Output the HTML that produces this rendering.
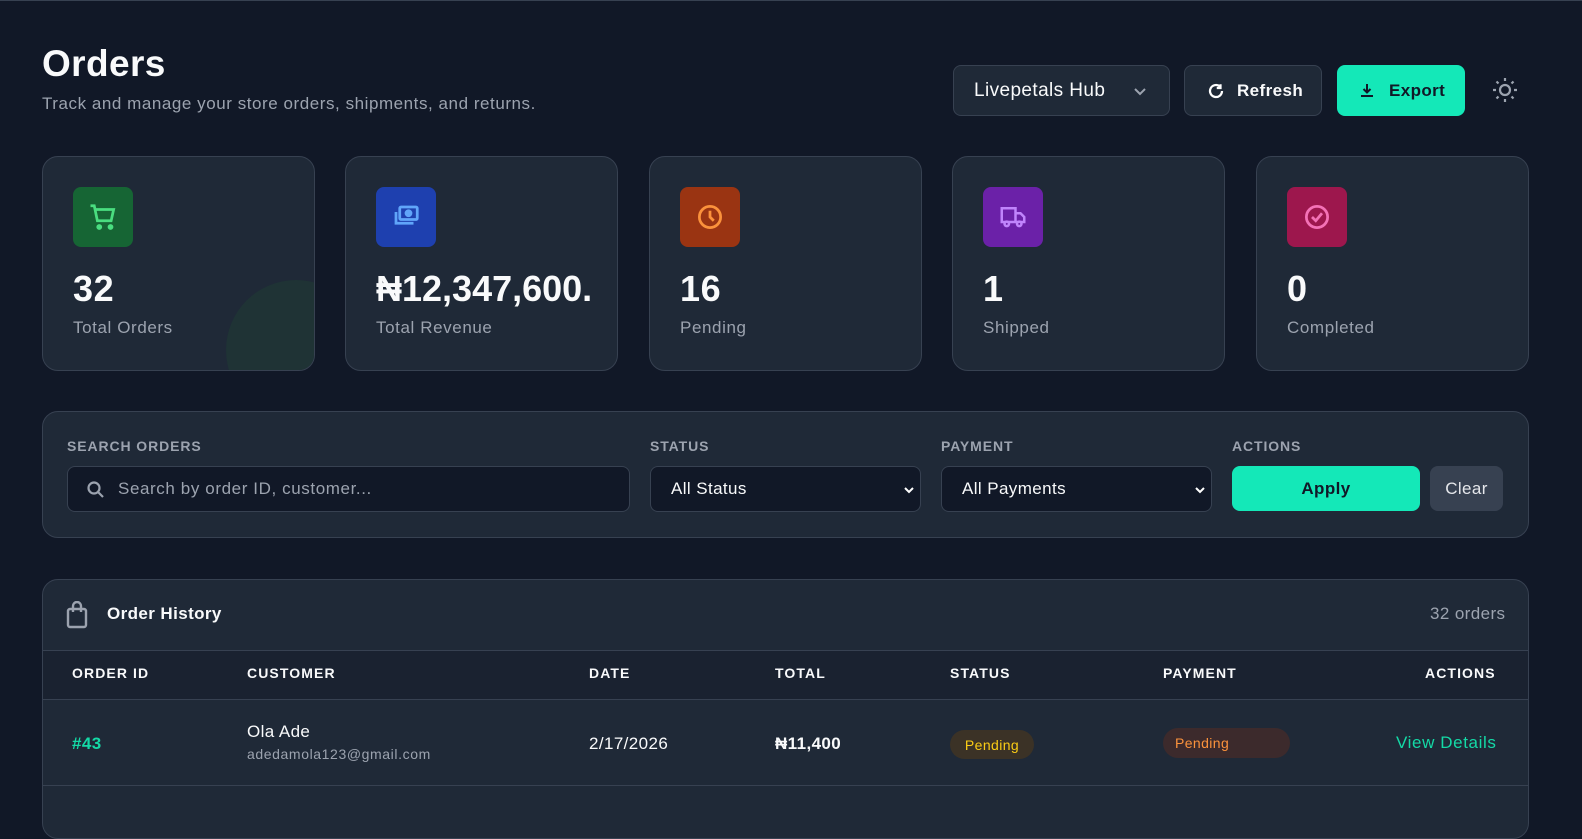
<!DOCTYPE html>
<html><head><meta charset="utf-8"><style>
*{box-sizing:border-box;margin:0;padding:0}
body{width:1582px;height:817px;background:#111827;font-family:"Liberation Sans",sans-serif;color:#f9fafb;position:relative;overflow:hidden;border-top:1px solid #374151;letter-spacing:.4px}
.a{position:absolute}
.card{position:absolute;top:155px;width:273px;height:215px;background:#1f2937;border:1px solid #374151;border-radius:16px;overflow:hidden}
.ic{position:absolute;left:30px;top:30px;width:60px;height:60px;border-radius:8px;display:flex;align-items:center;justify-content:center}
.num{position:absolute;left:30px;top:111px;font-size:36px;font-weight:bold;white-space:nowrap;letter-spacing:.6px}
.lbl{position:absolute;left:30px;top:161px;font-size:17px;color:#9ca3af;letter-spacing:.6px}
.flbl{position:absolute;top:437px;font-size:14px;font-weight:bold;color:#9ca3af;letter-spacing:.9px}
.inp{position:absolute;top:465px;height:46px;background:#111827;border:1px solid #374151;border-radius:8px;font-size:17px;display:flex;align-items:center}
.th{position:absolute;top:664px;font-size:14px;font-weight:bold;letter-spacing:1.1px}
</style></head><body>
<div class="a" style="left:42px;top:42px;font-size:37px;font-weight:bold">Orders</div>
<div class="a" style="left:42px;top:93px;font-size:17px;color:#9ca3af;letter-spacing:.55px">Track and manage your store orders, shipments, and returns.</div>

<div class="a" style="left:953px;top:64px;width:217px;height:51px;background:#1f2937;border:1px solid #374151;border-radius:8px;font-size:19px;display:flex;align-items:center;padding-left:20px">Livepetals Hub
<svg class="a" style="left:178px;top:17px" width="16" height="16" viewBox="0 0 16 16" fill="none" stroke="#9ca3af" stroke-width="2"><path d="M3 6l5 5 5-5"/></svg></div>
<div class="a" style="left:1184px;top:64px;width:138px;height:51px;background:#1f2937;border:1px solid #374151;border-radius:8px;font-size:17px;font-weight:bold;display:flex;align-items:center;padding-left:52px">Refresh
<svg class="a" style="left:22px;top:16px" width="18" height="18" viewBox="0 0 24 24" fill="none" stroke="#fff" stroke-width="3"><path d="M20 12a8 8 0 1 1-3-6.2"/><path d="M18 3v5h-5"/></svg></div>
<div class="a" style="left:1337px;top:64px;width:128px;height:51px;background:#14e8b8;border-radius:8px;font-size:17px;font-weight:bold;color:#111827;display:flex;align-items:center;padding-left:52px">Export
<svg class="a" style="left:22px;top:17px" width="16" height="16" viewBox="0 0 16 16" fill="none" stroke="#111827" stroke-width="2"><path d="M8 2v8M4.5 7L8 10.5 11.5 7M2 14h12"/></svg></div>
<svg class="a" style="left:1490px;top:75px" width="30" height="28" viewBox="0 0 30 28" fill="none" stroke="#9ca3af" stroke-width="2.2"><circle cx="15" cy="14" r="5"/><path d="M15 2v3M15 23v3M3 14h3M24 14h3M6.5 5.5l2 2M21.5 20.5l2 2M6.5 22.5l2-2M21.5 7.5l2-2"/></svg>

<div class="card" style="left:42px"><div class="a" style="left:183px;top:123px;width:140px;height:140px;border-radius:50%;background:#1f3335"></div>
<div class="ic" style="background:#166534"><svg width="30" height="30" viewBox="0 0 24 24" fill="none" stroke="#4ade80" stroke-width="2.2"><path d="M2 3h3l2.5 12h11l2-9H6"/><circle cx="9" cy="20" r="1.2" fill="#4ade80"/><circle cx="18" cy="20" r="1.2" fill="#4ade80"/></svg></div>
<div class="num">32</div><div class="lbl">Total Orders</div></div>
<div class="card" style="left:345px"><div class="ic" style="background:#1e40af"><svg width="30" height="30" viewBox="0 0 24 24" fill="none" stroke="#60a5fa" stroke-width="2.2"><rect x="7" y="4" width="14" height="10" rx="1"/><circle cx="14" cy="9" r="2" fill="#60a5fa"/><path d="M4 8v9h14"/></svg></div>
<div class="num" style="letter-spacing:0">₦12,347,600.</div><div class="lbl">Total Revenue</div></div>
<div class="card" style="left:649px"><div class="ic" style="background:#9a3412"><svg width="30" height="30" viewBox="0 0 24 24" fill="none" stroke="#fb923c" stroke-width="2.2"><circle cx="12" cy="12" r="8.5"/><path d="M12 7v5l3 3"/></svg></div>
<div class="num">16</div><div class="lbl">Pending</div></div>
<div class="card" style="left:952px"><div class="ic" style="background:#6b21a8"><svg width="32" height="30" viewBox="0 0 24 24" fill="none" stroke="#c084fc" stroke-width="2"><path d="M3 5h11v11H3zM14 9h4l3 3v4h-7"/><circle cx="7" cy="17.5" r="1.8" fill="#6b21a8"/><circle cx="17" cy="17.5" r="1.8" fill="#6b21a8"/></svg></div>
<div class="num">1</div><div class="lbl">Shipped</div></div>
<div class="card" style="left:1256px"><div class="ic" style="background:#9d174d"><svg width="30" height="30" viewBox="0 0 24 24" fill="none" stroke="#f472b6" stroke-width="2.2"><circle cx="12" cy="12" r="8.5"/><path d="M8 12l3 3 5-6"/></svg></div>
<div class="num">0</div><div class="lbl">Completed</div></div>

<div class="a" style="left:42px;top:410px;width:1487px;height:127px;background:#1f2937;border:1px solid #374151;border-radius:16px"></div>
<div class="flbl" style="left:67px">SEARCH ORDERS</div>
<div class="flbl" style="left:650px">STATUS</div>
<div class="flbl" style="left:941px">PAYMENT</div>
<div class="flbl" style="left:1232px">ACTIONS</div>
<div class="inp" style="left:67px;width:563px;padding-left:50px;color:#9ca3af;letter-spacing:.6px"><svg class="a" style="left:18px;top:13px" width="20" height="20" viewBox="0 0 20 20" fill="none" stroke="#9ca3af" stroke-width="2.2"><circle cx="8" cy="8" r="5.5"/><path d="M12 12l5 5"/></svg>Search by order ID, customer...</div>
<div class="inp" style="left:650px;width:271px;padding-left:20px">All Status<svg class="a" style="left:252px;top:18px" width="12" height="10" viewBox="0 0 12 10" fill="none" stroke="#fff" stroke-width="2"><path d="M2 3l4 4 4-4"/></svg></div>
<div class="inp" style="left:941px;width:271px;padding-left:20px">All Payments<svg class="a" style="left:252px;top:18px" width="12" height="10" viewBox="0 0 12 10" fill="none" stroke="#fff" stroke-width="2"><path d="M2 3l4 4 4-4"/></svg></div>
<div class="a" style="left:1232px;top:465px;width:188px;height:45px;background:#14e8b8;border-radius:8px;color:#111827;font-size:17px;font-weight:bold;display:flex;align-items:center;justify-content:center">Apply</div>
<div class="a" style="left:1430px;top:465px;width:73px;height:45px;background:#374151;border-radius:8px;color:#e5e7eb;font-size:17px;display:flex;align-items:center;justify-content:center">Clear</div>

<div class="a" style="left:42px;top:578px;width:1487px;height:260px;background:#1f2937;border:1px solid #374151;border-radius:16px;overflow:hidden">
<div class="a" style="left:0;top:70px;width:100%;height:50px;background:#1a2230;border-top:1px solid #374151;border-bottom:1px solid #374151"></div>
<div class="a" style="left:0;top:205px;width:100%;height:1px;background:#374151"></div>
</div>
<svg class="a" style="left:66px;top:600px" width="22" height="28" viewBox="0 0 22 28" fill="none" stroke="#9ca3af" stroke-width="2.4"><rect x="2" y="8" width="18" height="18" rx="2"/><path d="M7 11V5a4 4 0 0 1 8 0v6"/></svg>
<div class="a" style="left:107px;top:603px;font-size:17px;font-weight:bold">Order History</div>
<div class="a" style="left:1430px;top:603px;font-size:17px;color:#9ca3af">32 orders</div>
<div class="th" style="left:72px">ORDER ID</div>
<div class="th" style="left:247px">CUSTOMER</div>
<div class="th" style="left:589px">DATE</div>
<div class="th" style="left:775px">TOTAL</div>
<div class="th" style="left:950px">STATUS</div>
<div class="th" style="left:1163px">PAYMENT</div>
<div class="th" style="left:1425px">ACTIONS</div>
<div class="a" style="left:72px;top:733px;font-size:17px;font-weight:bold;color:#14d9a6">#43</div>
<div class="a" style="left:247px;top:721px;font-size:17px">Ola Ade</div>
<div class="a" style="left:247px;top:745px;font-size:14px;color:#9ca3af;letter-spacing:.6px">adedamola123@gmail.com</div>
<div class="a" style="left:589px;top:733px;font-size:17px">2/17/2026</div>
<div class="a" style="left:775px;top:733px;font-size:17px;font-weight:bold">₦11,400</div>
<div class="a" style="left:950px;top:729px;width:84px;height:29px;border-radius:15px;background:#3b3226;color:#facc15;font-size:14px;display:flex;align-items:center;justify-content:center">Pending</div>
<div class="a" style="left:1163px;top:727px;width:127px;height:30px;border-radius:15px;background:#3c2a2c;color:#fb923c;font-size:14px;display:flex;align-items:center;padding-left:12px">Pending</div>
<div class="a" style="left:1396px;top:732px;font-size:17px;color:#14d9a6;letter-spacing:.6px">View Details</div>
</body></html>
